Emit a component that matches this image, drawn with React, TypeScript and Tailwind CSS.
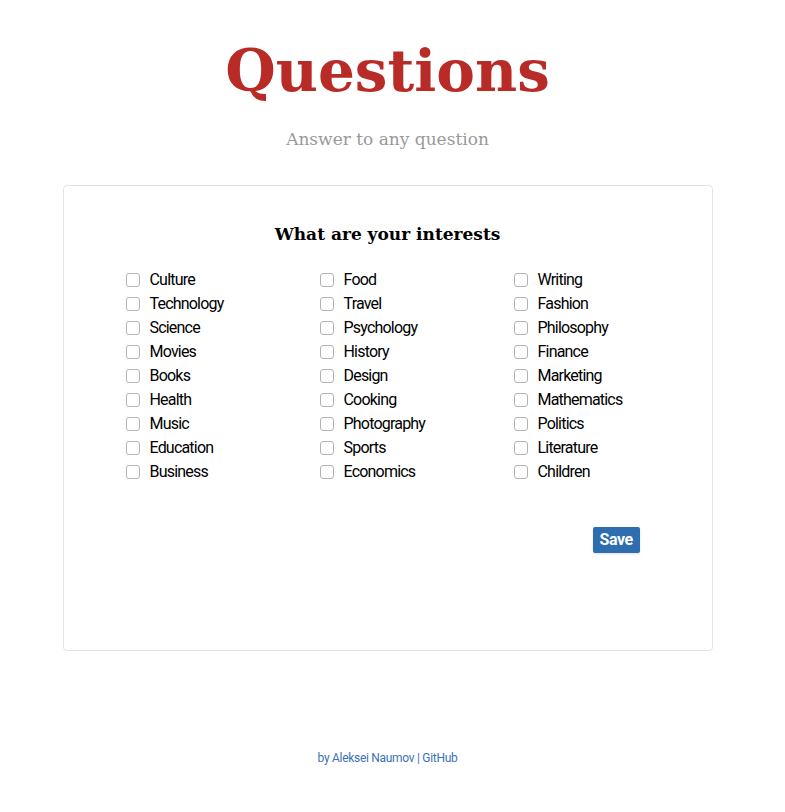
import React from "react";

const cols = [
  ["Culture", "Technology", "Science", "Movies", "Books", "Health", "Music", "Education", "Business"],
  ["Food", "Travel", "Psychology", "History", "Design", "Cooking", "Photography", "Sports", "Economics"],
  ["Writing", "Fashion", "Philosophy", "Finance", "Marketing", "Mathematics", "Politics", "Literature", "Children"],
];

function Item({ label }: { label: string }) {
  return (
    <label className="flex items-center h-[24px] gap-[10px]">
      <span className="w-[14px] h-[14px] rounded-[3px] border border-[#b5b5b5] bg-white shrink-0" />
      <span className="text-[16px] text-black tracking-[-0.8px] [font-family:Roboto,sans-serif]">{label}</span>
    </label>
  );
}

export default function App() {
  return (
    <div className="w-full min-h-[812px] bg-white flex flex-col items-center pr-[10px]">
      <h1 className="mt-[31px] text-[58px] leading-[80px] font-bold text-[#b92b27] [font-family:'DejaVu_Serif',serif]">
        Questions
      </h1>
      <p className="mt-[16px] text-[17px] text-[#999] [font-family:'DejaVu_Serif',serif]">Answer to any question</p>
      <div className="mt-[32px] w-[650px] h-[466px] border border-[#e3e3e3] rounded-[4px] flex flex-col">
        <h2 className="mt-[36px] text-center text-[17px] font-bold text-black [font-family:'DejaVu_Serif',serif]">
          What are your interests
        </h2>
        <div className="mt-[21px] ml-[62px] flex">
          {cols.map((c, i) => (
            <div key={i} className="w-[194px] flex flex-col">
              {c.map((l) => (
                <Item key={l} label={l} />
              ))}
            </div>
          ))}
        </div>
        <div className="mt-[43px] ml-[529px]">
          <button className="h-[26px] px-[7px] bg-[#2d6db0] text-white text-[16px] font-bold rounded-[2px] shadow-sm tracking-[-0.4px] [font-family:Roboto,sans-serif]">
            Save
          </button>
        </div>
      </div>
      <footer className="mt-[98px] text-[12px] text-[#3a72b8] tracking-[-0.3px] [font-family:Roboto,sans-serif]">
        by Aleksei Naumov | GitHub
      </footer>
    </div>
  );
}
